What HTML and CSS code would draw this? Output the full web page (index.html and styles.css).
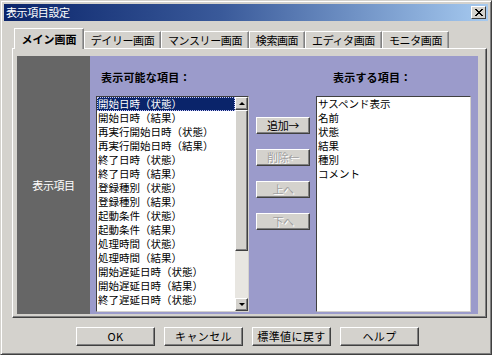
FILE: index.html
```html
<!DOCTYPE html>
<html lang="ja">
  <head>
    <meta charset="utf-8" />
    <title>表示項目設定</title>
    <link rel="stylesheet" href="styles.css">
  </head>
  <body>
    <div class="window">
      <div class="titlebar">
        <span class="title">表示項目設定</span>
        <span class="close">
          <svg width="8" height="7" viewBox="0 0 8 7"><path d="M0 0 L7 7 M1 0 L8 7 M7 0 L0 7 M8 0 L1 7" stroke="#000" stroke-width="1" shape-rendering="crispEdges"/></svg>
        </span>
      </div>

      <div class="tabs">
        <div class="tab active w1">メイン画面</div>
        <div class="tab w2">デイリー画面</div>
        <div class="tab w3">マンスリー画面</div>
        <div class="tab w4">検索画面</div>
        <div class="tab w5">エディタ画面</div>
        <div class="tab w6">モニタ画面</div>
      </div>

      <div class="panel">
        <div class="inner">
          <div class="side">表示項目</div>
          <div class="main">
            <div class="head head-left">表示可能な項目：</div>
            <div></div>
            <div class="head head-right">表示する項目：</div>

            <div class="listbox">
              <ul class="items">
                <li class="selected">開始日時（状態）</li>
                <li>開始日時（結果）</li>
                <li>再実行開始日時（状態）</li>
                <li>再実行開始日時（結果）</li>
                <li>終了日時（状態）</li>
                <li>終了日時（結果）</li>
                <li>登録種別（状態）</li>
                <li>登録種別（結果）</li>
                <li>起動条件（状態）</li>
                <li>起動条件（結果）</li>
                <li>処理時間（状態）</li>
                <li>処理時間（結果）</li>
                <li>開始遅延日時（状態）</li>
                <li>開始遅延日時（結果）</li>
                <li>終了遅延日時（状態）</li>
              </ul>
              <div class="scrollbar">
                <div class="sb-btn"><span class="arrow up"></span></div>
                <div class="sb-thumb"></div>
                <div class="sb-track"></div>
                <div class="sb-btn"><span class="arrow down"></span></div>
              </div>
            </div>

            <div class="moves">
              <button type="button" class="btn small">追加→</button>
              <button type="button" class="btn small" disabled>削除←</button>
              <button type="button" class="btn small" disabled>上へ</button>
              <button type="button" class="btn small" disabled>下へ</button>
            </div>

            <div class="listbox">
              <ul class="items">
                <li>サスペンド表示</li>
                <li>名前</li>
                <li>状態</li>
                <li>結果</li>
                <li>種別</li>
                <li>コメント</li>
              </ul>
            </div>
          </div>
        </div>
      </div>

      <div class="footer">
        <button type="button" class="btn wide">OK</button>
        <button type="button" class="btn wide">キャンセル</button>
        <button type="button" class="btn wide">標準値に戻す</button>
        <button type="button" class="btn wide">ヘルプ</button>
      </div>
    </div>
  </body>
</html>
```

FILE: styles.css
```css
body {
  margin: 0;
  background: #ffffff;
  font-family: "Noto Sans CJK JP", "Liberation Sans", sans-serif;
  font-size: 11px;
  letter-spacing: -0.4px;
  color: #000000;
}

.window {
  width: 492px;
  height: 355px;
  box-sizing: border-box;
  padding: 3px;
  background: #d4d2cd;
  border: 1px solid #d4d2cd;
  border-right-color: #404040;
  border-bottom-color: #404040;
  box-shadow: inset 1px 1px 0 #ffffff, inset -1px -1px 0 #808080;
}

.titlebar {
  height: 17px;
  display: flex;
  align-items: center;
  justify-content: space-between;
  padding: 0 2px 0 2px;
  background: linear-gradient(to right, #0a246a, #3a5a9a 45%, #a6caf0);
  color: #ffffff;
}

.title {
  font-size: 11px;
  line-height: 17px;
}

.close {
  width: 15px;
  height: 13px;
  box-sizing: border-box;
  display: flex;
  align-items: center;
  justify-content: center;
  background: #d4d2cd;
  border: 1px solid #ffffff;
  border-right-color: #404040;
  border-bottom-color: #404040;
}

.tabs {
  display: flex;
  align-items: flex-end;
  height: 21px;
  margin-top: 6px;
  padding-left: 10px;
  position: relative;
  z-index: 1;
}

.tab {
  height: 17px;
  box-sizing: border-box;
  display: flex;
  align-items: center;
  justify-content: center;
  border: 1px solid #ffffff;
  border-bottom: none;
  border-right: 1px solid #808080;
  box-shadow: inset -1px 0 0 #a0a0a0;
  font-size: 11px;
}

.tab.active {
  height: 21px;
  margin-bottom: -1px;
  font-weight: bold;
  background: #d4d2cd;
  letter-spacing: 0;
}

.w1 { width: 70px; }
.w2 { width: 77px; }
.w3 { width: 88px; }
.w4 { width: 56px; }
.w5 { width: 77px; }
.w6 { width: 67px; }

.panel {
  margin-left: 8px;
  width: 475px;
  height: 270px;
  box-sizing: border-box;
  padding: 7px 8px 3px 4px;
  border: 1px solid #ffffff;
  border-right-color: #404040;
  border-bottom-color: #404040;
  box-shadow: inset -1px -1px 0 #808080;
}

.inner {
  display: flex;
  height: 258px;
}

.side {
  width: 74px;
  background: #666666;
  color: #ffffff;
  display: flex;
  align-items: center;
  justify-content: center;
}

.main {
  flex: 1;
  background: #9b9bcb;
  display: grid;
  grid-template-columns: 153px 54px 154px;
  grid-template-rows: 26px 216px;
  column-gap: 7px;
  padding: 14px 7px 0 6px;
  align-content: start;
}

.main > :nth-child(6) {
  margin-left: -1px;
}

.head {
  font-weight: bold;
  line-height: 14px;
  letter-spacing: 0.2px;
}

.head-left {
  padding-left: 5px;
}

.head-right {
  padding-left: 16px;
}

.listbox {
  display: flex;
  box-sizing: border-box;
  height: 216px;
  background: #ffffff;
  border: 1px solid #404040;
  border-right-color: #d4d2cd;
  border-bottom-color: #d4d2cd;
}

.items {
  flex: 1;
  margin: 0;
  padding: 0;
  list-style: none;
  overflow: hidden;
  font-size: 10.5px;
  letter-spacing: 0;
}

.items li {
  height: 14px;
  line-height: 14px;
  padding-left: 1px;
  white-space: nowrap;
}

.items li.selected {
  background: #0a246a;
  color: #ffffff;
  outline: 1px dotted #c8c8ff;
  outline-offset: -1px;
}

.scrollbar {
  width: 13px;
  display: flex;
  flex-direction: column;
}

.sb-btn,
.sb-thumb {
  box-sizing: border-box;
  background: #d4d2cd;
  border: 1px solid #ffffff;
  border-right-color: #404040;
  border-bottom-color: #404040;
  box-shadow: inset -1px -1px 0 #808080;
}

.sb-btn {
  height: 13px;
  display: flex;
  align-items: center;
  justify-content: center;
}

.sb-thumb {
  height: 141px;
}

.sb-track {
  flex: 1;
  background: #e8e6e1;
}

.arrow {
  width: 0;
  height: 0;
  border-left: 3px solid transparent;
  border-right: 3px solid transparent;
}

.arrow.up {
  border-bottom: 3px solid #000000;
}

.arrow.down {
  border-top: 3px solid #000000;
}

.moves {
  display: flex;
  flex-direction: column;
  gap: 15px;
  padding-top: 21px;
}

.btn {
  box-sizing: border-box;
  padding: 0;
  background: #d4d2cd;
  border: 1px solid #ffffff;
  border-right-color: #404040;
  border-bottom-color: #404040;
  box-shadow: inset -1px -1px 0 #808080;
  font-family: "Noto Sans CJK JP", "Liberation Sans", sans-serif;
  font-size: 11px;
  letter-spacing: -0.4px;
  color: #000000;
  line-height: 1;
}

.btn:disabled {
  color: #a0a0a0;
  text-shadow: 1px 1px 0 #ffffff;
}

.small {
  width: 54px;
  height: 17px;
}

.footer {
  display: flex;
  gap: 9px;
  margin-top: 9px;
  padding-left: 72px;
}

.wide {
  width: 79px;
  height: 19px;
  letter-spacing: 0.4px;
}
```
